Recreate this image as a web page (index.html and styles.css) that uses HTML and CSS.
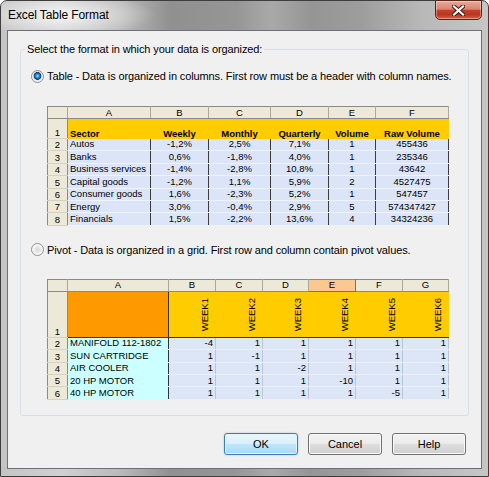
FILE: index.html
```html
<!DOCTYPE html>
<html lang="en">
<head>
    <meta charset="UTF-8">
    <meta name="viewport" content="width=device-width, initial-scale=1.0">
    <title>Excel Table Format</title>
    <link rel="stylesheet" href="styles.css">
</head>
<body>
    <div class="window">
        <div class="titlebar">
            <span class="title">Excel Table Format</span>
            <button class="close" type="button" aria-label="Close">
                <svg width="13" height="11" viewBox="0 0 13 11">
                    <path d="M2 1.5 L11 9.5 M11 1.5 L2 9.5" stroke="#3a1a14" stroke-width="4.2" stroke-linecap="square"/>
                    <path d="M2 1.5 L11 9.5 M11 1.5 L2 9.5" stroke="#ffffff" stroke-width="2.2" stroke-linecap="square"/>
                </svg>
            </button>
        </div>
        <div class="client">
            <fieldset class="group">
                <legend>Select the format in which your data is organized:</legend>

                <label class="option">
                    <input type="radio" name="format" value="table" checked>
                    <span>Table - Data is organized in columns. First row must be a header with column names.</span>
                </label>
                <div class="preview first">
                    <table class="sheet t1">
                        <colgroup>
                            <col style="width:20px"><col style="width:83px"><col style="width:58px"><col style="width:62px">
                            <col style="width:58px"><col style="width:47px"><col style="width:73px">
                        </colgroup>
                        <tr class="hd">
                            <th></th><th>A</th><th>B</th><th>C</th><th>D</th><th>E</th><th>F</th>
                        </tr>
                        <tr class="lbl">
                            <td class="rn">1</td><td class="txt">Sector</td><td>Weekly</td><td>Monthly</td><td>Quarterly</td><td>Volume</td><td>Raw Volume</td>
                        </tr>
                        <tr class="row">
                            <td class="rn">2</td><td class="txt">Autos</td><td>-1,2%</td><td>2,5%</td><td>7,1%</td><td>1</td><td>455436</td>
                        </tr>
                        <tr class="row">
                            <td class="rn">3</td><td class="txt">Banks</td><td>0,6%</td><td>-1,8%</td><td>4,0%</td><td>1</td><td>235346</td>
                        </tr>
                        <tr class="row">
                            <td class="rn">4</td><td class="txt">Business services</td><td>-1,4%</td><td>-2,8%</td><td>10,8%</td><td>1</td><td>43642</td>
                        </tr>
                        <tr class="row">
                            <td class="rn">5</td><td class="txt">Capital goods</td><td>-1,2%</td><td>1,1%</td><td>5,9%</td><td>2</td><td>4527475</td>
                        </tr>
                        <tr class="row">
                            <td class="rn">6</td><td class="txt">Consumer goods</td><td>1,6%</td><td>-2,3%</td><td>5,2%</td><td>1</td><td>547457</td>
                        </tr>
                        <tr class="row">
                            <td class="rn">7</td><td class="txt">Energy</td><td>3,0%</td><td>-0,4%</td><td>2,9%</td><td>5</td><td>574347427</td>
                        </tr>
                        <tr class="row">
                            <td class="rn">8</td><td class="txt">Financials</td><td>1,5%</td><td>-2,2%</td><td>13,6%</td><td>4</td><td>34324236</td>
                        </tr>
                    </table>
                </div>

                <label class="option second">
                    <input type="radio" name="format" value="pivot">
                    <span>Pivot - Data is organized in a grid. First row and column contain pivot values.</span>
                </label>
                <div class="preview">
                    <table class="sheet t2">
                        <colgroup>
                            <col style="width:20px"><col style="width:101px"><col style="width:47px"><col style="width:47px">
                            <col style="width:46px"><col style="width:47px"><col style="width:47px"><col style="width:46px">
                        </colgroup>
                        <tr class="hd">
                            <th></th><th>A</th><th>B</th><th>C</th><th>D</th><th class="sel">E</th><th>F</th><th>G</th>
                        </tr>
                        <tr class="lbl">
                            <td class="rn">1</td><td class="corner"></td>
                            <td class="week"><span>WEEK1</span></td>
                            <td class="week"><span>WEEK2</span></td>
                            <td class="week"><span>WEEK3</span></td>
                            <td class="week"><span>WEEK4</span></td>
                            <td class="week"><span>WEEK5</span></td>
                            <td class="week"><span>WEEK6</span></td>
                        </tr>
                        <tr class="row">
                            <td class="rn">2</td><td class="name">MANIFOLD 112-1802</td><td>-4</td><td>1</td><td>1</td><td>1</td><td>1</td><td>1</td>
                        </tr>
                        <tr class="row">
                            <td class="rn">3</td><td class="name">SUN CARTRIDGE</td><td>1</td><td>-1</td><td>1</td><td>1</td><td>1</td><td>1</td>
                        </tr>
                        <tr class="row">
                            <td class="rn">4</td><td class="name">AIR COOLER</td><td>1</td><td>1</td><td>-2</td><td>1</td><td>1</td><td>1</td>
                        </tr>
                        <tr class="row">
                            <td class="rn">5</td><td class="name">20 HP MOTOR</td><td>1</td><td>1</td><td>1</td><td>-10</td><td>1</td><td>1</td>
                        </tr>
                        <tr class="row">
                            <td class="rn">6</td><td class="name">40 HP MOTOR</td><td>1</td><td>1</td><td>1</td><td>1</td><td>-5</td><td>1</td>
                        </tr>
                    </table>
                </div>
            </fieldset>

            <div class="buttons">
                <button class="btn default" type="button">OK</button>
                <button class="btn" type="button">Cancel</button>
                <button class="btn" type="button">Help</button>
            </div>
        </div>
    </div>
</body>
</html>
```

FILE: styles.css
```css
* {
    box-sizing: border-box;
}
body {
    margin: 0;
    font-family: "Liberation Sans", Arial, sans-serif;
    font-size: 11px;
    color: #000;
    background: #fff;
}

/* window frame */
.window {
    width: 489px;
    height: 477px;
    border: 1px solid #3e3e3e;
    border-radius: 7px 7px 0 0;
    padding: 0 6px 7px;
    display: flex;
    flex-direction: column;
    background: linear-gradient(90deg, #c4c4c4 0, #d0d0d0 60px, #b9b9b9 120px, #909090 170px, #969696 235px, #a9a9a9 270px, #959595 310px, #9d9d9d 360px, #b8b8b8 420px, #c6c6c6 100%);
}
.titlebar {
    height: 29px;
    margin: 0 -6px;
    padding: 0 6px 0 7px;
    display: flex;
    justify-content: space-between;
    align-items: flex-start;
    background: radial-gradient(ellipse 95px 22px at 60px 14px, rgba(255, 255, 255, 0.8), rgba(255, 255, 255, 0));
}
.title {
    font-size: 12px;
    line-height: 28px;
    letter-spacing: -0.1px;
    color: #000;
}
.close {
    width: 47px;
    height: 20px;
    margin-top: -1px;
    padding: 0;
    border: 1px solid #5a241a;
    border-radius: 0 0 5px 5px;
    background: linear-gradient(#e9a897 0, #dc8571 45%, #c4432a 52%, #b8361d 75%, #d5644b 100%);
    box-shadow: inset 0 0 0 1px rgba(255, 255, 255, 0.35);
    display: flex;
    align-items: center;
    justify-content: center;
}

/* client area */
.client {
    flex: 1;
    background: #f0f0f0;
    border: 1px solid #6d7075;
    display: flex;
    flex-direction: column;
}
.group {
    margin: 11px 12px 0;
    padding: 0 0 15px 0;
    border: 1px solid #d5dfe5;
    border-radius: 3px;
    min-width: 0;
}
.group legend {
    margin-left: 4px;
    padding: 0 2px;
    line-height: 14px;
    letter-spacing: -0.1px;
}
.option {
    display: flex;
    align-items: center;
    gap: 3px;
    height: 16px;
    margin: 12px 0 0 10px;
    letter-spacing: -0.12px;
}
.option.second {
    margin-top: 16px;
}
.option input {
    -webkit-appearance: none;
    appearance: none;
    flex: none;
    width: 13px;
    height: 13px;
    margin: 0;
    border-radius: 50%;
    border: 1px solid #8e8f8f;
    background: radial-gradient(circle, #d6d6d6 0, #e6e6e6 2.5px, #f4f4f4 4.5px, #fbfbfb 5.5px);
}
.option input:checked {
    background: radial-gradient(circle at 50% 45%, #b5e2ff 0, #3c9be4 1.4px, #0e5ea7 2.8px, #1d3c60 3.6px, #d2d2d2 4.1px, #ececec 4.8px, #fafafa 5.5px);
}
.preview {
    margin: 22px 0 0 26px;
}
.option + .preview:not(.first) {
    margin-top: 21px;
}

/* spreadsheet previews */
.sheet {
    border-collapse: collapse;
    table-layout: fixed;
    width: 401px;
    border: 1px solid #8a8a8a;
    font-family: "Liberation Sans", Arial, sans-serif;
    font-size: 9.5px;
    line-height: 10px;
}
.sheet th,
.sheet td {
    padding: 0 2px;
    white-space: nowrap;
    overflow: hidden;
}
.sheet .hd th {
    height: 12px;
    background: #ece9d8;
    font-weight: normal;
    text-align: center;
    border-right: 1px solid #aca899;
    border-bottom: 1px solid #8a8a8a;
}
.sheet .hd th.sel {
    background: #fcc791;
    border-right: 1px solid #6a6ab8;
    border-bottom: 1px solid #6a6ab8;
}
.sheet .row {
    height: 12.4px;
}

.t1 .lbl {
    height: 20px;
}
.t1 .lbl td {
    background: #ffcc00;
    font-weight: bold;
    text-align: center;
    vertical-align: bottom;
    border-right: 1px solid #ffcc00;
}
.t1 .row td {
    background: #dbe5f7;
    text-align: center;
    border-right: 1px solid #3c3c3c;
    border-bottom: 1px solid #eef3fc;
}
.t1 td.txt {
    text-align: left;
}

.t2 .lbl {
    height: 46px;
}
.t2 .lbl td.corner {
    background: #ff9900;
    border-right: 1px solid #333;
    border-bottom: 1px solid #333;
}
.t2 .lbl td.week {
    background: #ffcc00;
    text-align: right;
    vertical-align: bottom;
    padding: 0 5px 3px 0;
    border-right: 1px solid #ffcc00;
    border-bottom: 1px solid #333;
}
.t2 .week span {
    display: inline-block;
    writing-mode: vertical-rl;
    transform: rotate(180deg);
    line-height: 10px;
}
.t2 .row td {
    background: #dce6f6;
    text-align: right;
    border-right: 1px solid #bcc5d4;
    border-bottom: 1px solid #eaeff8;
}
.t2 .row td.name {
    background: #ccffff;
    text-align: left;
    border-right: 1px solid #333;
    border-bottom: 1px solid #ccffff;
}

/* row numbers keep the header look in every row */
.sheet tr td.rn {
    background: #ece9d8;
    font-weight: normal;
    text-align: center;
    vertical-align: bottom;
    border-right: 1px solid #8a8a8a;
    border-bottom: 1px solid #d6d2c2;
}

/* dialog buttons */
.buttons {
    display: flex;
    justify-content: flex-end;
    gap: 10px;
    margin-top: 17px;
    padding-right: 15px;
}
.btn {
    width: 74px;
    height: 22px;
    padding: 0;
    font-family: "Liberation Sans", Arial, sans-serif;
    font-size: 11px;
    color: #000;
    border: 1px solid #707070;
    border-radius: 3px;
    background: linear-gradient(#f2f2f2 0, #ebebeb 48%, #dddddd 52%, #cfcfcf 100%);
    box-shadow: inset 0 0 0 1px #fbfbfb;
}
.btn.default {
    border-color: #3c7fb1;
    background: linear-gradient(#eaf6fd 0, #d9f0fc 48%, #bee6fd 52%, #a7d9f5 100%);
    box-shadow: inset 0 0 0 1px #e4f4fc, 0 0 2px rgba(60, 127, 177, 0.4);
}
```
